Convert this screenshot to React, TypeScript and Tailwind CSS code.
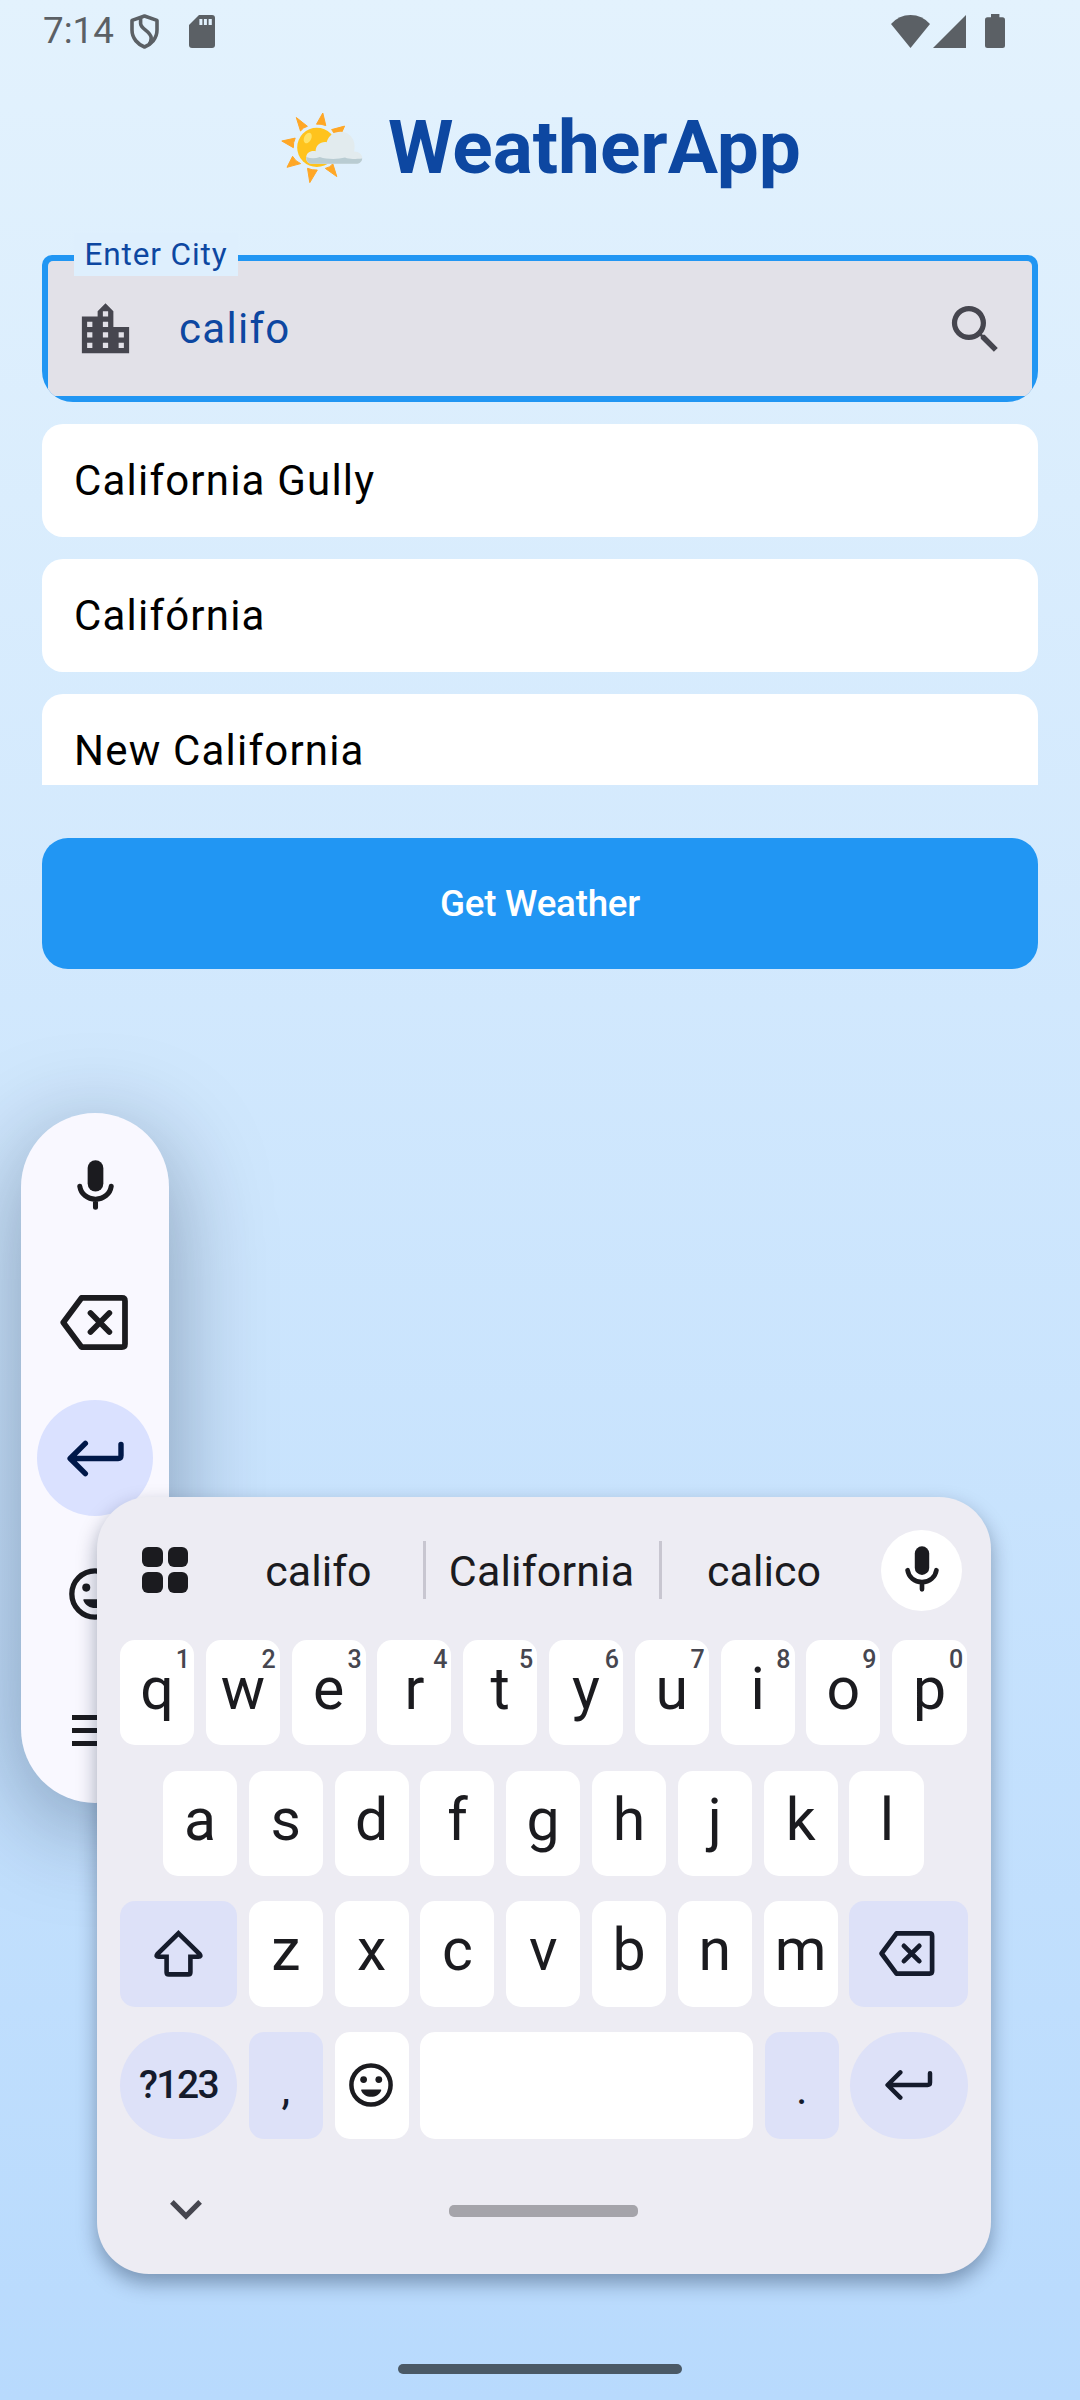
import React from "react";
import { MdLocationCity, MdSearch } from "react-icons/md";

type IconProps = { className?: string };

const MicIcon = ({ className }: IconProps) => (
  <svg viewBox="0 0 34.4 46" className={className} fill="none" stroke="currentColor" strokeWidth="4.7" strokeLinecap="round">
    <rect x="9.9" y="0" width="14.6" height="29" rx="7.3" fill="currentColor" stroke="none" />
    <path d="M2.6 24.2C3.6 31.2 9.6 36.2 17.2 36.2S30.8 31.2 31.8 24.2M17.2 37v6.6" />
  </svg>
);

const BackspaceIcon = ({ className }: IconProps) => (
  <svg viewBox="0 0 55.5 45" className={className} fill="none" stroke="currentColor" strokeWidth="4.7" strokeLinecap="round" strokeLinejoin="round">
    <path d="M17.5 2.4H50.6Q53.1 2.4 53.1 4.9V40.1Q53.1 42.6 50.6 42.6H17.5L2.6 22.5Z" />
    <path d="M24.9 14.8 40.3 30.2M40.3 14.8 24.9 30.2" />
  </svg>
);

const EnterIcon = ({ className }: IconProps) => (
  <svg viewBox="0 0 47.5 30" className={className} fill="none" stroke="currentColor" strokeWidth="4.5" strokeLinecap="round" strokeLinejoin="round">
    <path d="M15.3 2.4 2.6 15 15.3 27.6M3 15H42.6Q45 15 45 12.6V3.2" />
  </svg>
);

const SmileIcon = ({ className }: IconProps) => (
  <svg viewBox="-22 -22 44 44" className={className}>
    <circle r="19.6" fill="none" stroke="currentColor" strokeWidth="4.5" />
    <circle cx="-7.4" cy="-5.4" r="3.4" fill="currentColor" />
    <circle cx="7.8" cy="-5.4" r="3.4" fill="currentColor" />
    <path d="M-9.2 4.4H9.6Q10.6 4.4 10.2 5.4C8.6 9.4 4.8 11.8 .2 11.8S-8.2 9.4-9.8 5.4Q-10.2 4.4-9.2 4.4Z" fill="currentColor" />
  </svg>
);

const ShiftIcon = () => (
  <svg viewBox="0 0 49 47" className="h-[47px] w-[49px]" fill="none" stroke="currentColor" strokeWidth="4.6" strokeLinejoin="miter">
    <path d="M24.5 3.3 45.6 24Q47.6 26.8 44.4 26.8H36.4V42.2Q36.4 44.4 34.2 44.4H14.8Q12.6 44.4 12.6 42.2V26.8H4.6Q1.4 26.8 3.4 24Z" />
  </svg>
);

const SunCloud = () => (
  <svg viewBox="0 0 84 76" className="h-[76px] w-[84px]">
    <g fill="#ffa726" stroke="#ffa726" strokeWidth="1" strokeLinejoin="round">
      <path d="M16.3 7.5 27.4 16.3Q23 17.5 20.5 21Z" />
      <path d="M42.8 3 45.8 15.6Q41 13.6 36.5 14.2Z" />
      <path d="M64.6 16.1 61 24 53.5 22.6Q52.6 20.6 51.6 19.6Z" />
      <path d="M1.8 31 15.2 28.1Q13 32.5 13.4 37.7Z" />
      <path d="M12.6 46.3Q15.4 51.5 20.6 53.6L7 57.3Z" />
      <path d="M27.5 58.3Q32 60.4 37.3 60L29.8 72.6Z" />
      <path d="M45.3 58.4Q50 57.5 52.8 53.8L56.8 66.6Z" />
    </g>
    <circle cx="36.8" cy="37.4" r="19.6" fill="#ffc31d" />
    <ellipse cx="27.7" cy="28" rx="3.5" ry="5.6" fill="#ffe265" transform="rotate(28 27.7 28)" />
    <path d="M31.5 53.7C28 53.7 25.8 50.6 26.2 47.2 26.5 43 30 40.4 35.6 41.2 36 35 40.6 31.4 46.6 32.2 48.6 25.5 53.6 21.7 60.6 21.7 68.6 21.7 74.8 28 74.6 36.6 74.6 38.6 74.4 40 74 41.4 79.2 41.4 82.4 44.4 82.2 48.2 82 51.6 79.6 53.7 76 53.7Z" fill="#e2ebee" />
    <path d="M26.3 47C31 48.8 35.6 48.6 39.8 47 47 49.6 58 49.4 65 47.6 70.5 50 77 48.6 82.2 48.4 82 51.6 79.6 53.7 76 53.7H31.5C28 53.7 26 50.6 26.3 47Z" fill="#b9ccd2" />
  </svg>
);

const StatusBar = () => (
  <div className="flex h-[62px] shrink-0 items-center pl-[43px] pr-[75px] text-[#5b6065]">
    <span className="text-[36.75px] leading-[62px]">7:14</span>
    <svg viewBox="0 0 29 35" className="ml-[16px] h-[35px] w-[29px]" fill="none" stroke="currentColor" strokeWidth="3.6">
      <path d="M14.5 2 27 6.4V16C27 24.5 21 30.5 14.5 33 8 30.5 2 24.5 2 16V6.4Z" strokeLinejoin="round" />
      <path d="M10.6 4V9.5C10.8 15.5 20.8 17 21.2 24 21.2 26 20.6 28 19.4 30" />
    </svg>
    <svg viewBox="0 0 26 33" className="ml-[30px] mt-px h-[33px] w-[26px]">
      <path d="M10 0H23Q26 0 26 3V30Q26 33 23 33H3Q0 33 0 30V10Z" fill="currentColor" />
      <path d="M10.4 4h3v6h-3zM14.9 4h3v6h-3zM19.6 4h3.2v6h-3.2z" fill="#e2f1fd" />
    </svg>
    <svg viewBox="0 0 39 33" className="ml-auto h-[33px] w-[39px]">
      <path d="M19.5 33 0 9Q8 0 19.5 0T39 9Z" fill="currentColor" />
    </svg>
    <svg viewBox="0 0 33 33" className="ml-[3px] h-[33px] w-[33px]">
      <path d="M33 0V33H0Z" fill="currentColor" />
    </svg>
    <svg viewBox="0 0 20 34" className="ml-[19px] h-[34px] w-[20px]">
      <path d="M6 0h8.4v3.3H17.5Q20 3.3 20 6V31.5Q20 34 17.5 34H2.5Q0 34 0 31.5V6Q0 3.3 2.5 3.3H6Z" fill="currentColor" />
    </svg>
  </div>
);

const SearchField = () => (
  <div className="relative mt-[45px] h-[147px]">
    <div className="h-full overflow-hidden rounded-b-[31px] rounded-t-[10px] bg-[#2196f3] p-[6px]">
      <div className="flex h-full items-center rounded-t-[5px] bg-[#e2e1e8] pl-[26px] pr-[25px] text-[#46464f]">
        <MdLocationCity className="mt-[2px] size-[63px]" />
        <span className="ml-[42px] grow text-[42px] leading-[60px] tracking-[1.3px] text-[#0d47a1]">califo</span>
        <MdSearch className="mt-[2px] size-[63px]" />
      </div>
    </div>
    <div className="absolute left-[32px] top-[-22px] flex h-[43px] w-[164px] items-center justify-center bg-[#deeffd] text-[31.5px] leading-[43px] tracking-[0.9px] text-[#0d47a1]">
      Enter City
    </div>
  </div>
);

const cities = ["California Gully", "Califórnia", "New California"];

const Toolbar = () => (
  <div className="absolute left-[21px] top-[1113px] flex h-[690px] w-[148px] flex-col items-center rounded-[74px] bg-[#f9f8ff] pt-[14px] text-[#1b1b1f] shadow-[0_22px_100px_rgba(0,20,50,0.36)]">
    <div className="flex h-[136.5px] w-[116px] items-center justify-center pb-[20px]">
      <MicIcon className="h-[50px] w-[37px]" />
    </div>
    <div className="flex h-[136.5px] w-[116px] items-center justify-center pb-[19px] pr-[3px]">
      <BackspaceIcon className="h-[55px] w-[68px]" />
    </div>
    <div className="flex size-[116px] items-center justify-center rounded-full bg-[#dae1ff] text-[#001849]">
      <EnterIcon className="h-[37px] w-[57px]" />
    </div>
    <div className="mt-[52px] flex w-[116px] justify-center">
      <SmileIcon className="size-[52px]" />
    </div>
    <div className="mt-[95px] flex w-[46px] flex-col gap-[8px]">
      <div className="h-[5px] bg-current" />
      <div className="h-[5px] bg-current" />
      <div className="h-[5px] bg-current" />
    </div>
  </div>
);

const Key = ({ label, hint }: { label: string; hint?: string }) => (
  <div className="relative flex h-full w-[74px] items-center justify-center rounded-[15px] bg-white pb-[7px] text-[59px] leading-[70px] last:w-[75px]">
    {label}
    {hint && (
      <span className="absolute right-[4px] top-[7px] text-[25px] font-medium leading-[26px] text-[#46464f]">{hint}</span>
    )}
  </div>
);

const Keyboard = () => (
  <div className="absolute left-[97px] top-[1497px] flex h-[777px] w-[894px] flex-col rounded-[52px] bg-[#edecf3] px-[23px] text-[#1b1b1f] shadow-[0_9px_20px_rgba(0,20,50,0.36)]">
    <div className="flex h-[143px] items-center pt-[4px] text-[43px] leading-[60px]">
      <div className="mb-[2px] ml-[22px] grid w-[46px] grid-cols-2 gap-[5px]">
        <div className="h-[20.5px] rounded-[6px] bg-current" />
        <div className="h-[20.5px] rounded-[6px] bg-current" />
        <div className="h-[20.5px] rounded-[6px] bg-current" />
        <div className="h-[20.5px] rounded-[6px] bg-current" />
      </div>
      <div className="ml-[26px] w-[209px] text-center">califo</div>
      <div className="mb-[2px] h-[58px] w-[3px] bg-[#c8c6d0]" />
      <div className="w-[233px] pr-[2px] text-center tracking-[0.15px]">California</div>
      <div className="mb-[2px] h-[58px] w-[3px] bg-[#c8c6d0]" />
      <div className="w-[204px] text-center">calico</div>
      <div className="ml-[15px] flex size-[81px] items-center justify-center rounded-full bg-white">
        <MicIcon className="mb-[3px] h-[46px] w-[34px]" />
      </div>
    </div>
    <div className="flex h-[105px] gap-[11.8px]">
      {"qwertyuiop".split("").map((c, i) => (
        <Key key={c} label={c} hint={String((i + 1) % 10)} />
      ))}
    </div>
    <div className="mt-[25.5px] flex h-[105px] gap-[11.8px] pl-[43px]">
      {"asdfghjkl".split("").map((c) => (
        <Key key={c} label={c} />
      ))}
    </div>
    <div className="mt-[25.5px] flex h-[105.5px] gap-[11.8px]">
      <div className="flex w-[117px] items-center justify-center rounded-[15px] bg-[#dde1f8] text-[#151b2c]">
        <ShiftIcon />
      </div>
      {"zxcvbnm".split("").map((c) => (
        <Key key={c} label={c} />
      ))}
      <div className="flex flex-1 items-center justify-center rounded-[15px] bg-[#dde1f8] pr-[3px] text-[#151b2c]">
        <BackspaceIcon className="h-[45px] w-[55.5px]" />
      </div>
    </div>
    <div className="mt-[25.5px] flex h-[106.5px] gap-[11.8px] text-[#151b2c]">
      <div className="flex w-[117px] items-center justify-center rounded-full bg-[#dde1f8] text-[39px] font-medium tracking-[-1.6px]">?123</div>
      <div className="flex w-[74px] items-center justify-center rounded-[15px] bg-[#dde1f8] pt-[7px] text-[44px] leading-[60px]">,</div>
      <div className="flex w-[74px] items-center justify-center rounded-[15px] bg-white pr-[1px] text-[#1b1b1f]">
        <SmileIcon className="size-[44px]" />
      </div>
      <div className="w-[332.5px] rounded-[15px] bg-white" />
      <div className="flex w-[74px] items-center justify-center rounded-[15px] bg-[#dde1f8] pt-[7px] text-[44px] leading-[60px]">.</div>
      <div className="flex flex-1 items-center justify-center rounded-full bg-[#dde1f8]">
        <EnterIcon className="h-[30px] w-[47.5px]" />
      </div>
    </div>
    <div className="flex items-center pl-[50px] pt-[61px]">
      <svg viewBox="0 0 32 20" className="h-[20px] w-[32px]" fill="none" stroke="#46464f" strokeWidth="5.2">
        <path d="M1.9 1.9 16 16 30.1 1.9" />
      </svg>
      <div className="ml-[247px] mt-[3px] h-[11.5px] w-[189px] rounded-[5px] bg-[#a5a4aa]" />
    </div>
  </div>
);

export default function App() {
  return (
    <div className="relative flex h-[2400px] w-[1080px] flex-col overflow-hidden bg-linear-to-b from-[#e3f2fd] to-[#b8dafd] font-['Roboto',sans-serif]">
      <StatusBar />
      <main className="flex flex-col px-[42px]">
        <h1 className="mt-[38px] flex h-[110px] items-center pb-[14px] pl-[238px] text-[74.8px] font-bold leading-[96px] text-[#0d47a1]">
          <SunCloud />
          <span className="ml-[24px]">WeatherApp</span>
        </h1>
        <SearchField />
        <div className="mt-[22px] flex h-[361px] flex-col gap-[22px] overflow-hidden">
          {cities.map((city) => (
            <div key={city} className="flex h-[113px] shrink-0 items-center rounded-[21px] bg-white pl-[32px] text-[42px] tracking-[1.2px] text-black">
              {city}
            </div>
          ))}
        </div>
        <button className="mt-[53px] h-[131px] rounded-[26px] bg-[#2196f3] text-[36.75px] font-medium tracking-[-0.25px] text-white">
          Get Weather
        </button>
      </main>
      <Toolbar />
      <Keyboard />
      <div className="absolute bottom-[26px] left-[398px] h-[10px] w-[284px] rounded-full bg-[#4a5966]" />
    </div>
  );
}
